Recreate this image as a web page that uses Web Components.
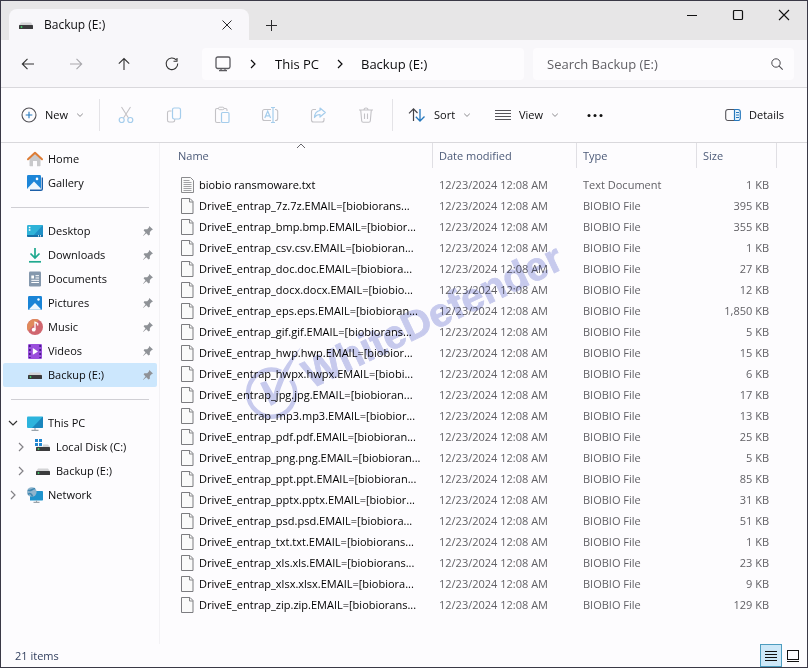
<!DOCTYPE html>
<html lang="en">
<head>
<meta charset="utf-8">
<title>Backup (E:)</title>
<style>
  html { background: #3a3946; }
  body { margin: 0; }
  explorer-window {
    --line: #d9d8dc;
    --ink: #0c0c0e;
    font: 11px/16px "Open Sans", "Noto Sans", sans-serif;
    color: var(--ink);
  }
</style>
</head>
<body>
<explorer-window></explorer-window>
<script>
const ICONS = {
  drive: [16, 16, '<path d="M3 5.500h10l2 3H1z" fill="#d4d4d6"/><rect x="1" y="8" width="14" height="4" rx=".6" fill="#3b3b3d"/><circle cx="3.500" cy="10" r=".9" fill="#3fd06a"/>'],
  close: [12, 12, '<path d="M1.500 1.500l9 9M10.500 1.500l-9 9" fill="none" stroke="#2a2a2c"/>'],
  plus: [12, 12, '<path d="M6.500 1v11M1 6.500h11" fill="none" stroke="#2a2a2c"/>'],
  winMin: [12, 12, '<path d="M1 6.500h10" stroke="#111" fill="none"/>'],
  winMax: [12, 12, '<rect x="1.500" y="1.500" width="9" height="9" rx="1" fill="none" stroke="#111" stroke-width="1.200"/>'],
  winClose: [12, 12, '<path d="M1 1l10 10M11 1L1 11" fill="none" stroke="#111" stroke-width="1.100"/>'],
  back: [16, 16, '<path d="M14 8H2.500M7.500 2.800L2.300 8l5.200 5.200" fill="none" stroke="#333" stroke-width="1.100"/>'],
  forward: [16, 16, '<path d="M2 8h11.500M8.500 2.800L13.700 8l-5.200 5.200" fill="none" stroke="#a9a8ac" stroke-width="1.100"/>'],
  up: [16, 16, '<path d="M8 14V2.500M2.800 7.700L8 2.500l5.200 5.200" fill="none" stroke="#333" stroke-width="1.100"/>'],
  refresh: [16, 16, '<path d="M13.700 7.500a5.800 5.800 0 1 1-1.500-3.600M13 2v3.200H9.500" fill="none" stroke="#333" stroke-width="1.100"/>'],
  monitor: [18, 18, '<rect x="2" y="2" width="14" height="11.500" rx="1.800" fill="none" stroke="#5c5b60" stroke-width="1.300"/><path d="M7 13.500v2M11 13.500v2M5 15.700h8" fill="none" stroke="#5c5b60" stroke-width="1.200"/>'],
  chevRight: [12, 12, '<path d="M4 2l4 4-4 4" fill="none" stroke="currentColor" stroke-width="1.200"/>'],
  chevDown: [8, 8, '<path d="M1.200 2.700L4 5.400l2.800-2.700" fill="none" stroke="#8d8c90"/>'],
  search: [14, 14, '<circle cx="6" cy="6" r="4.200" fill="none" stroke="#4a494e"/><path d="M9.200 9.200l3.500 3.500" stroke="#4a494e" stroke-width="1.100"/>'],
  newItem: [16, 16, '<circle cx="8" cy="8" r="7" fill="none" stroke="#525156" stroke-width="1.100"/><path d="M8 4.700v6.600M4.700 8h6.600" stroke="#2678bd" stroke-width="1.100"/>'],
  cut: [18, 18, '<path d="M4.500 1l7 11M13.500 1l-7 11" fill="none" stroke="#c3c2c6" stroke-width="1.100"/><circle cx="4.700" cy="14" r="2.500" fill="none" stroke="#a5cdec" stroke-width="1.200"/><circle cx="13.300" cy="14" r="2.500" fill="none" stroke="#a5cdec" stroke-width="1.200"/>'],
  copy: [18, 18, '<path d="M6.500 5H4.200A1.700 1.700 0 0 0 2.500 6.700v7.600A1.700 1.700 0 0 0 4.200 16H8a1.700 1.700 0 0 0 1.700-1.700V13" fill="none" stroke="#c3c2c6" stroke-width="1.100"/><rect x="7.500" y="2" width="8" height="11" rx="1.700" fill="none" stroke="#a5cdec" stroke-width="1.200"/>'],
  paste: [18, 18, '<path d="M7.500 16.500H4A1.500 1.500 0 0 1 2.500 15V4A1.500 1.500 0 0 1 4 2.500h1.500M11 2.500h1.500A1.500 1.500 0 0 1 14 4v1" fill="none" stroke="#c3c2c6" stroke-width="1.100"/><rect x="5.500" y="1.200" width="5.500" height="2.500" rx="1.200" fill="none" stroke="#c3c2c6"/><rect x="8.500" y="6.500" width="7.500" height="10" rx="1" fill="none" stroke="#a5cdec" stroke-width="1.200"/>'],
  rename: [18, 18, '<path d="M10 3.500H3.500A2 2 0 0 0 1.500 5.500v7a2 2 0 0 0 2 2H10M14 3.500h.7a2 2 0 0 1 2 2v7a2 2 0 0 1-2 2H14" fill="none" stroke="#c3c2c6" stroke-width="1.100"/><path d="M12 1.500v15M10 1.500h4M10 16.500h4M3.800 12l2.900-7 2.900 7M4.800 9.800h3.800" fill="none" stroke="#a5cdec" stroke-width="1.200"/>'],
  share: [18, 18, '<path d="M7 3.500H4.500a2 2 0 0 0-2 2v8.500a2 2 0 0 0 2 2h8.500a2 2 0 0 0 2-2v-2" fill="none" stroke="#c3c2c6" stroke-width="1.100"/><path d="M11 2l5.300 4.500L11 11V8.500c-3 0-4.300 1-5.500 3 .2-3.800 2-6.500 5.500-7z" fill="none" stroke="#a5cdec" stroke-width="1.200" stroke-linejoin="round"/>'],
  trash: [18, 18, '<path d="M2 4h14M3.700 4l1 11a1.500 1.500 0 0 0 1.500 1.300h5.600a1.500 1.500 0 0 0 1.500-1.300l1-11M7 4a2 2 0 0 1 4 0M7.500 7.500v5.500M10.500 7.500v5.500" fill="none" stroke="#c3c2c6" stroke-width="1.100"/>'],
  sort: [18, 16, '<path d="M5.500 14V2M1 6.300l4.500-4.500L9.500 6" fill="none" stroke="#444348" stroke-width="1.200"/><path d="M12 2v12M7.800 9.800L12 14l4.500-4.500" fill="none" stroke="#2678bd" stroke-width="1.300"/>'],
  view: [16, 16, '<path d="M0 3.500h16M0 6.500h16M0 9.500h16M0 12.500h16" stroke="#55545a"/>'],
  more: [18, 8, '<circle cx="3" cy="4.500" r="1.500" fill="#111"/><circle cx="9" cy="4.500" r="1.500" fill="#111"/><circle cx="15" cy="4.500" r="1.500" fill="#111"/>'],
  details: [16, 14, '<path d="M9 1.500H3A2.300 2.300 0 0 0 .700 3.800v6.400A2.300 2.300 0 0 0 3 12.500h6" fill="none" stroke="#55545a" stroke-width="1.100"/><path d="M9.500 1.500H13a2.300 2.300 0 0 1 2.300 2.300v6.400A2.300 2.300 0 0 1 13 12.500H9.500z" fill="#eaf5fd" stroke="#2678bd" stroke-width="1.200"/><path d="M11 4.500h3M11 7h3M11 9.500h3" stroke="#2678bd"/>'],
  home: [16, 16, '<path d="M2.500 7L8 2l5.500 5v7.500a.7.700 0 0 1-.7.700H10V10H6v5.200H3.200a.7.700 0 0 1-.7-.7z" fill="#c9c9cb"/><path d="M1 8.200L8 1.700l7 6.500" fill="none" stroke="#dd7c36" stroke-width="2" stroke-linecap="round" stroke-linejoin="round"/>'],
  gallery: [16, 16, '<path d="M3 15.300h11a1.300 1.300 0 0 0 1.300-1.300V2.500" fill="none" stroke="#1c5fa8" stroke-width="1.400"/><rect width="14" height="14" rx="1.300" fill="#1d86d8"/><path d="M.500 13.200L7 6.500l6.700 6.700a1 1 0 0 1-.7.800H1z" fill="#eef7fd"/><circle cx="10" cy="3.900" r="1.300" fill="#fff"/>'],
  desktop: [16, 16, '<rect y="2" width="16" height="12" rx="1.200" fill="#2fb3d8"/><path d="M16 2v10.800A1.200 1.200 0 0 1 14.800 14H5z" fill="#1f8fc6"/><path d="M0 12h16v.8A1.200 1.200 0 0 1 14.800 14H1.200A1.200 1.200 0 0 1 0 12.800z" fill="#176fa5"/><path d="M1.800 4.500h1.600M1.800 7h1.600M11 12.900h1M13 12.900h1" stroke="#fff" stroke-width="1.400"/>'],
  downloads: [16, 16, '<path d="M8 1v9.500M3.500 6.500L8 11l4.500-4.500" fill="none" stroke="#20a98f" stroke-width="1.700"/><path d="M2 14.800h12" stroke="#20a98f" stroke-width="1.700"/>'],
  documents: [16, 16, '<rect x="2" y=".5" width="12" height="15" rx="1.200" fill="#8598ad"/><path d="M4.300 4.500h2.700v3H4.300z" fill="#fff"/><path d="M8.500 4.700h3.500M8.500 7h3.500M4.300 9.300h7.700M4.300 11.500h7.700" stroke="#fff"/>'],
  pictures: [16, 16, '<rect x="1" y="1" width="14" height="14" rx="1.200" fill="#1a84d6"/><path d="M2 14.300L8 8l6 6.300a1 1 0 0 1-.6.400H2.600z" fill="#eef7fd"/><circle cx="11.500" cy="4.500" r="1.200" fill="#fff"/>'],
  music: [16, 16, '<circle cx="8" cy="8" r="8" fill="#d0666f"/><path d="M8 0a8 8 0 0 0-8 8 8 8 0 0 0 1 4L12 1a8 8 0 0 0-4-1z" fill="#e08a5b"/><circle cx="6.700" cy="10.700" r="1.900" fill="#fff"/><path d="M8 10.700V3.200l2.700 1.300v2" fill="none" stroke="#fff" stroke-width="1.300"/>'],
  videos: [16, 16, '<rect x="1" y="1" width="14" height="15" rx="1.200" fill="#9a4fdc"/><path d="M2.800 2v13M13.200 2v13" stroke="#4a1c8a" stroke-width="1.800" stroke-dasharray="2 2"/><path d="M5.800 5l5.200 3.400-5.200 3.400z" fill="#fff"/>'],
  thisPc: [16, 16, '<rect y="1.500" width="16" height="11.500" rx="1" fill="#2db4dd"/><path d="M16 1.500v10.500a1 1 0 0 1-1 1H5z" fill="#1a86bd"/><path d="M8 13v2M4.500 15.300h7" stroke="#9aa3ab" stroke-width="1.200"/>'],
  localDisk: [16, 16, '<path d="M0 0h3v3H0zM4 0h3v3H4zM0 4h3v3H0zM4 4h3v3H4z" fill="#1f86cf"/><path d="M8 5.500h5L15 8H1.500l.5-.5h6z" fill="#d4d4d6"/><rect x="1" y="8" width="14" height="4" rx=".6" fill="#3b3b3d"/><circle cx="3.500" cy="10" r=".9" fill="#3fd06a"/>'],
  network: [16, 16, '<path d="M3 4h12.300a.7.700 0 0 1 .7.700v8.100a.7.700 0 0 1-.7.700H3z" fill="#1f93cc"/><path d="M9.500 13.500v1.500M6.500 15.400h6" stroke="#9aa3ab" stroke-width="1.100"/><circle cx="4.800" cy="5" r="4.800" fill="#8fb4cc"/><path d="M1 3c2 2 4-1 7-1.500M1 7.500c2-2.500 4 0 4.500 2" fill="none" stroke="#3f86b0" stroke-width="1.500"/>'],
  pin: [12, 12, '<path d="M7.200 1l3.800 3.600-1.200.5-1.900 2-.1 2.700-1.300.7-2.200-2.200L1.200 11 1 10.700l2.500-3.300L1.600 5.300l.8-1.100 2.800.1 1.700-1.800z" fill="#8f9297"/>'],
  text: [13, 16, '<path d="M.500.500h9l3 3v12H.500z" fill="#fafafa" stroke="#8b8b8e"/><path d="M2.500 3.500h6M2.500 5.500h8M2.500 7.500h8M2.500 9.500h8M2.500 11.500h8M2.500 13.500h8" stroke="#a2a2a5"/>'],
  file: [13, 16, '<path d="M.500.500h8.500l3 3v12H.500z" fill="#fafafa" stroke="#7c7c80"/><path d="M8.500.500v3.500h3.500" fill="none" stroke="#858588"/>'],
  sortMark: [10, 6, '<path d="M1 5l4-4 4 4" fill="none" stroke="#66656a"/>'],
  listView: [14, 14, '<path d="M1 2.500h12M1 5.500h12M1 8.500h12M1 11.500h12" stroke="#111"/>'],
  iconView: [14, 14, '<rect x="1.500" y="1.500" width="11" height="9" fill="none" stroke="#111"/><path d="M1 12.500h12" stroke="#111"/>']
};

/* Base class: clones a template into an open shadow root. */
class Part extends HTMLElement {
  constructor() { super(); this.attachShadow({ mode: 'open' }); }
  render(html) {
    const t = document.createElement('template');
    t.innerHTML = html;
    this.shadowRoot.replaceChildren(t.content.cloneNode(true));
  }
}
const RESET = `button{font:inherit;color:inherit;background:none;border:0;padding:0;margin:0;display:flex;align-items:center;justify-content:center}`;

customElements.define('x-icon', class extends Part {
  connectedCallback() {
    const [w, h, body] = ICONS[this.getAttribute('name')];
    this.render(`<style>:host{display:inline-flex;flex:none}svg{display:block;overflow:visible}</style>
      <svg width="${w}" height="${h}" viewBox="0 0 ${w} ${h}" aria-hidden="true">${body}</svg>`);
  }
});

customElements.define('title-bar', class extends Part {
  connectedCallback() {
    this.render(`<style>${RESET}
      :host{display:flex;height:39px;background:#e7e6e7;padding-left:8px}
      .tab{display:flex;align-items:center;width:240px;box-sizing:border-box;margin-top:8px;padding:0 16px 0 9px;background:#f8f7fa;border-radius:8px 8px 0 0;font-size:12px;gap:10px}
      .tab span{flex:1}
      .add{width:44px;padding-top:8px}
      .win{display:flex;margin-left:auto;align-items:flex-start}
      .win button{width:46px;height:28px}
      </style>
      <div class="tab"><x-icon name="drive"></x-icon><span>Backup (E:)</span><button aria-label="Close tab"><x-icon name="close"></x-icon></button></div>
      <button class="add" aria-label="New tab"><x-icon name="plus"></x-icon></button>
      <div class="win"><button aria-label="Minimize"><x-icon name="winMin"></x-icon></button><button aria-label="Maximize"><x-icon name="winMax"></x-icon></button><button aria-label="Close"><x-icon name="winClose"></x-icon></button></div>`);
  }
});

customElements.define('address-bar', class extends Part {
  connectedCallback() {
    this.render(`<style>${RESET}
      :host{display:flex;align-items:center;box-sizing:border-box;height:48px;padding:0 13px 0 3px;background:#f8f7fa;border-bottom:1px solid var(--line);font-size:13px}
      .nav{width:48px;height:32px}
      nav{flex:1;display:flex;align-items:center;height:32px;margin-left:6px;padding-left:12px;background:#fdfcfe;border-radius:4px}
      nav a{color:inherit;text-decoration:none;white-space:nowrap}
      nav x-icon+x-icon{margin-left:15px}
      nav .sep{margin-right:16px}
      nav a+.sep{margin-left:15px;margin-right:15px}
      .search{display:flex;align-items:center;box-sizing:border-box;width:261px;height:32px;margin-left:9px;padding:0 10px 0 14px;background:#fdfcfe;border-radius:4px}
      input{flex:1;min-width:0;border:0;padding:0;background:none;font:inherit;color:#605f64;outline:0}
      input::placeholder{color:#605f64;opacity:1}
      </style>
      <button class="nav" aria-label="Back"><x-icon name="back"></x-icon></button>
      <button class="nav" aria-label="Forward" disabled><x-icon name="forward"></x-icon></button>
      <button class="nav" aria-label="Up"><x-icon name="up"></x-icon></button>
      <button class="nav" aria-label="Refresh"><x-icon name="refresh"></x-icon></button>
      <nav aria-label="Location"><x-icon name="monitor"></x-icon><x-icon class="sep" name="chevRight"></x-icon><a href="#pc">This PC</a><x-icon class="sep" name="chevRight"></x-icon><a href="#e">Backup (E:)</a></nav>
      <div class="search"><input type="text" aria-label="Search Backup (E:)" placeholder="Search Backup (E:)"><button aria-label="Search"><x-icon name="search"></x-icon></button></div>`);
  }
});

customElements.define('tool-button', class extends Part {
  connectedCallback() {
    const label = this.getAttribute('label') || '';
    const off = this.hasAttribute('off') ? 'disabled' : '';
    this.render(`<style>${RESET}
      :host{display:flex;flex:none;width:48px}
      :host([wide]){width:auto}
      button{width:100%;height:32px;gap:8px;white-space:nowrap}
      :host([wide]) button{justify-content:flex-start}
      </style>
      <button aria-label="${label}" ${off}><x-icon name="${this.getAttribute('icon')}"></x-icon><slot></slot>${this.hasAttribute('menu') ? '<x-icon name="chevDown"></x-icon>' : ''}</button>`);
  }
});

customElements.define('tool-bar', class extends Part {
  connectedCallback() {
    this.render(`<style>
      :host{display:flex;align-items:center;box-sizing:border-box;height:55px;padding:0 23px 0 20px;background:#fdfcfe;border-bottom:1px solid var(--line)}
      i{width:1px;height:32px;background:#e4e3e7;margin:0 2px}
      .new{width:76px}.sort{width:72px;margin:0 15px 0 13px}.view{width:76px}
      .details{margin-left:auto}
      </style>
      <tool-button class="new" wide menu icon="newItem" label="New">New</tool-button><i></i>
      <tool-button off icon="cut" label="Cut"></tool-button><tool-button off icon="copy" label="Copy"></tool-button><tool-button off icon="paste" label="Paste"></tool-button><tool-button off icon="rename" label="Rename"></tool-button><tool-button off icon="share" label="Share"></tool-button><tool-button off icon="trash" label="Delete"></tool-button><i></i>
      <tool-button class="sort" wide menu icon="sort" label="Sort">Sort</tool-button>
      <tool-button class="view" wide menu icon="view" label="View">View</tool-button>
      <tool-button class="more" icon="more" label="See more"></tool-button>
      <tool-button class="details" wide icon="details" label="Details">Details</tool-button>`);
  }
});

customElements.define('nav-item', class extends Part {
  connectedCallback() {
    const tree = this.getAttribute('tree');
    const mark = tree ? `<x-icon class="mark ${tree}" name="chevRight"></x-icon>` : '<span class="mark"></span>';
    this.render(`<style>
      :host{display:block}
      a{display:flex;align-items:center;height:24px;padding:0 3px 0 4px;color:inherit;text-decoration:none;border-radius:2px}
      :host([nested]) a{padding-left:12px}
      :host([current]) a{background:#cce7fd}
      .mark{width:12px;height:12px;margin-right:8px;color:#838287}
      .open{transform:rotate(90deg);color:#333}
      .label{flex:1;margin-left:5px;white-space:nowrap}
      </style>
      <a href="#">${mark}<x-icon name="${this.getAttribute('icon')}"></x-icon><span class="label"><slot></slot></span>${this.hasAttribute('pinned') ? '<x-icon name="pin"></x-icon>' : ''}</a>`);
  }
});

customElements.define('nav-pane', class extends Part {
  connectedCallback() {
    this.render(`<style>
      :host{display:block;flex:none;box-sizing:border-box;width:159px;padding:4px 2px 0 2px;border-right:1px solid #f3f2f5}
      hr{border:0;height:1px;background:#d0cfd4;margin:12px 8px 11px}
      </style>
      <nav-item icon="home">Home</nav-item><nav-item icon="gallery">Gallery</nav-item><hr>
      <nav-item pinned icon="desktop">Desktop</nav-item><nav-item pinned icon="downloads">Downloads</nav-item><nav-item pinned icon="documents">Documents</nav-item><nav-item pinned icon="pictures">Pictures</nav-item><nav-item pinned icon="music">Music</nav-item><nav-item pinned icon="videos">Videos</nav-item><nav-item pinned current icon="drive">Backup (E:)</nav-item><hr>
      <nav-item tree="open" icon="thisPc">This PC</nav-item><nav-item nested tree="shut" icon="localDisk">Local Disk (C:)</nav-item><nav-item nested tree="shut" icon="drive">Backup (E:)</nav-item><nav-item tree="shut" icon="network">Network</nav-item>`);
  }
});

const FILES = [
  ['biobio ransmoware.txt', '1 KB'],
  ['DriveE_entrap_7z.7z.EMAIL=[biobiorans...', '395 KB'],
  ['DriveE_entrap_bmp.bmp.EMAIL=[biobior...', '355 KB'],
  ['DriveE_entrap_csv.csv.EMAIL=[biobioran...', '1 KB'],
  ['DriveE_entrap_doc.doc.EMAIL=[biobiora...', '27 KB'],
  ['DriveE_entrap_docx.docx.EMAIL=[biobio...', '12 KB'],
  ['DriveE_entrap_eps.eps.EMAIL=[biobioran...', '1,850 KB'],
  ['DriveE_entrap_gif.gif.EMAIL=[biobiorans...', '5 KB'],
  ['DriveE_entrap_hwp.hwp.EMAIL=[biobior...', '15 KB'],
  ['DriveE_entrap_hwpx.hwpx.EMAIL=[biobi...', '6 KB'],
  ['DriveE_entrap_jpg.jpg.EMAIL=[biobioran...', '17 KB'],
  ['DriveE_entrap_mp3.mp3.EMAIL=[biobior...', '13 KB'],
  ['DriveE_entrap_pdf.pdf.EMAIL=[biobioran...', '25 KB'],
  ['DriveE_entrap_png.png.EMAIL=[biobioran...', '5 KB'],
  ['DriveE_entrap_ppt.ppt.EMAIL=[biobioran...', '85 KB'],
  ['DriveE_entrap_pptx.pptx.EMAIL=[biobior...', '31 KB'],
  ['DriveE_entrap_psd.psd.EMAIL=[biobiora...', '51 KB'],
  ['DriveE_entrap_txt.txt.EMAIL=[biobiorans...', '1 KB'],
  ['DriveE_entrap_xls.xls.EMAIL=[biobiorans...', '23 KB'],
  ['DriveE_entrap_xlsx.xlsx.EMAIL=[biobiora...', '9 KB'],
  ['DriveE_entrap_zip.zip.EMAIL=[biobiorans...', '129 KB']
];

customElements.define('file-table', class extends Part {
  connectedCallback() {
    const rows = FILES.map(([name, size], i) => `<tr><td class="name"><div><x-icon name="${i ? 'file' : 'text'}"></x-icon><span>${name}</span></div></td><td>12/23/2024 12:08 AM</td><td>${i ? 'BIOBIO File' : 'Text Document'}</td><td class="size">${size}</td><td></td></tr>`).join('');
    this.render(`<style>
      :host{display:block;padding-bottom:12px}
      table{width:100%;border-collapse:separate;border-spacing:0;table-layout:fixed}
      th{position:relative;height:25px;padding:0 0 0 6px;text-align:left;font-weight:400;color:#4c5a78;border-right:1px solid #e0dfe4}
      th:first-child{padding-left:18px}
      th:last-child{border:0}
      th x-icon{position:absolute;top:0;left:50%}
      td{height:21px;padding:0 0 0 6px;color:#626166;white-space:nowrap}
      tbody::before{content:"";display:block;height:6px}
      td.name{padding-left:21px;color:#000}
      .name div{display:flex;align-items:center;gap:5px}
      .size{text-align:right;padding-right:8px}
      .date{width:144px}.type{width:120px}.sz{width:80px}.rest{width:29px}
      </style>
      <table><colgroup><col><col class="date"><col class="type"><col class="sz"><col class="rest"></colgroup>
      <thead><tr><th scope="col" aria-sort="ascending">Name<x-icon name="sortMark"></x-icon></th><th scope="col">Date modified</th><th scope="col">Type</th><th scope="col">Size</th><th aria-hidden="true"></th></tr></thead>
      <tbody>${rows}</tbody></table>`);
  }
});

/* Translucent brand mark lying over the file list. */
customElements.define('brand-mark', class extends Part {
  connectedCallback() {
    this.render(`<style>
      :host{position:absolute;left:80px;top:85px;mix-blend-mode:multiply;pointer-events:none}
      svg{display:block;overflow:visible}
      text{font:bold 40px "Liberation Sans",sans-serif;fill:#c9cdee;stroke:#c9cdee;stroke-width:.8px}
      </style>
      <svg width="330" height="200" viewBox="0 0 330 200"><path d="M41 143.700A23.500 23.500 0 1 0 51 152" fill="none" stroke="#c9cdee" stroke-width="4.500"/>
      <path d="M20 155l6-2 7.500 13C38 149 46 134 61 119 51 136 42 154 36 175l-5 3z" fill="#c9cdee"/>
      <text transform="translate(71 161) rotate(-25.500)">WhiteDefender</text></svg>`);
  }
});

customElements.define('status-bar', class extends Part {
  connectedCallback() {
    this.render(`<style>${RESET}
      :host{display:flex;align-items:center;height:23px;padding:0 3px 0 14px;color:#33405f}
      span{flex:1}
      button{box-sizing:border-box;width:22px;height:23px;border:1px solid transparent}
      .on{background:#cde8f8;border-color:#4d9dbf}
      </style><span>21 items</span><button class="on" aria-label="Details view" aria-pressed="true"><x-icon name="listView"></x-icon></button><button aria-label="Large icons" aria-pressed="false"><x-icon name="iconView"></x-icon></button>`);
  }
});

customElements.define('explorer-window', class extends Part {
  connectedCallback() {
    this.render(`<style>
      :host{display:flex;flex-direction:column;box-sizing:border-box;min-height:100vh;background:#fdfcfe;border:1px solid #3a3946}
      main{flex:1;display:flex}
      .files{position:relative;flex:1;min-width:0}
      file-table{padding-right:1px}
      </style>
      <title-bar></title-bar><address-bar></address-bar><tool-bar></tool-bar>
      <main><nav-pane></nav-pane><div class="files"><file-table></file-table><brand-mark></brand-mark></div></main>
      <status-bar></status-bar>`);
  }
});
</script>
</body>
</html>
